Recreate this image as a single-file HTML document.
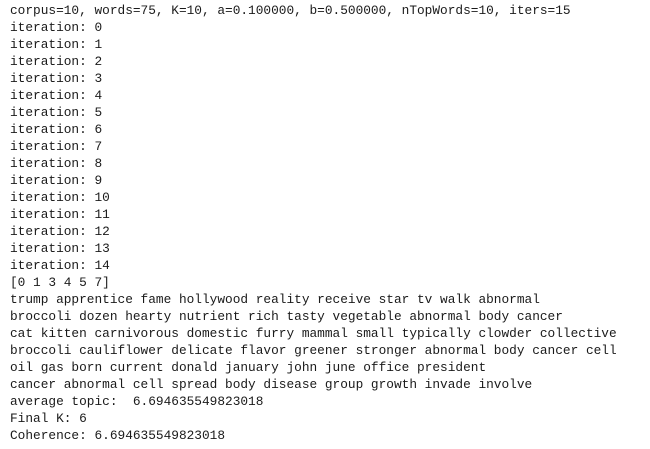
<!DOCTYPE html>
<html><head><style>
body{margin:0;background:#fff;width:650px;height:449px;overflow:hidden}
pre{margin:0;padding:2px 0 0 10px;font-family:"Liberation Mono",monospace;font-size:12.8px;line-height:17px;color:#1a1a1a}
</style></head><body><pre>corpus=10, words=75, K=10, a=0.100000, b=0.500000, nTopWords=10, iters=15
iteration: 0
iteration: 1
iteration: 2
iteration: 3
iteration: 4
iteration: 5
iteration: 6
iteration: 7
iteration: 8
iteration: 9
iteration: 10
iteration: 11
iteration: 12
iteration: 13
iteration: 14
[0 1 3 4 5 7]
trump apprentice fame hollywood reality receive star tv walk abnormal
broccoli dozen hearty nutrient rich tasty vegetable abnormal body cancer
cat kitten carnivorous domestic furry mammal small typically clowder collective
broccoli cauliflower delicate flavor greener stronger abnormal body cancer cell
oil gas born current donald january john june office president
cancer abnormal cell spread body disease group growth invade involve
average topic:  6.694635549823018
Final K: 6
Coherence: 6.694635549823018</pre></body></html>
